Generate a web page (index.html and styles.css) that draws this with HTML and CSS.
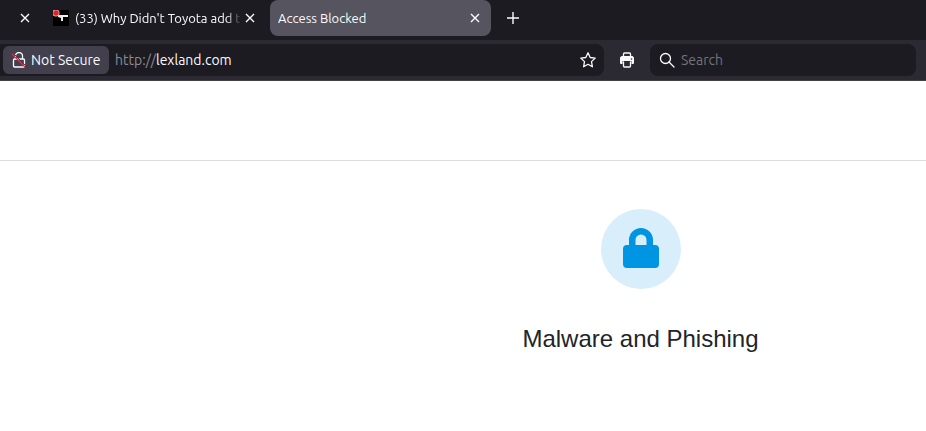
FILE: index.html
```html
<!DOCTYPE html>
<html lang="en">
<head>
<meta charset="utf-8">
<title>Access Blocked</title>
<link rel="stylesheet" href="styles.css">
</head>
<body>
<header class="browser">
  <nav class="tabs" aria-label="Tabs">
    <div class="tab tab-cut">
      <button class="close" aria-label="Close tab"><svg viewBox="0 0 16 16"><path d="M4 4l8 8M12 4l-8 8"/></svg></button>
    </div>
    <div class="tab">
      <svg class="favicon" viewBox="0 0 16 16"><path fill="#000" d="M0 0h16v16H0z"/><path fill="#eee" d="M5 5h10v2h-5v4H8V8L5 7z"/><circle cx="3" cy="3" r="3.500" fill="#f3b5b5"/><circle cx="3" cy="3" r="2.700" fill="#e5202b"/></svg>
      <span class="tab-title fade">(33) Why Didn't Toyota add t</span>
      <button class="close" aria-label="Close tab"><svg viewBox="0 0 16 16"><path d="M4 4l8 8M12 4l-8 8"/></svg></button>
    </div>
    <div class="tab active">
      <span class="tab-title">Access Blocked</span>
      <button class="close" aria-label="Close tab"><svg viewBox="0 0 16 16"><path d="M4 4l8 8M12 4l-8 8"/></svg></button>
    </div>
    <button class="new-tab" aria-label="New tab"><svg viewBox="0 0 16 16"><path d="M8 2v12M2 8h12"/></svg></button>
  </nav>
  <div class="toolbar">
    <div class="address">
      <button class="security">
        <svg viewBox="0 0 16 16"><path class="line" d="M4.500 7V4a3.500 3.500 0 0 1 7 0V7M3.500 7h9a1 1 0 0 1 1 1v6a1 1 0 0 1-1 1h-9a1 1 0 0 1-1-1V8a1 1 0 0 1 1-1z"/><path class="gap" d="M2 1l13 13"/><path class="slash" d="M1 2l13 13"/></svg>
        <span>Not Secure</span>
      </button>
      <span class="url"><span class="scheme">http://</span>lexland.com</span>
      <button class="icon-button" aria-label="Bookmark this page"><svg viewBox="0 0 16 16"><path class="line" d="M8 .8l2.200 4.700 5 .6-3.700 3.500.9 5.200L8 12.300l-4.400 2.500.9-5.200L.8 6.100l5-.6z"/></svg></button>
    </div>
    <button class="icon-button" aria-label="Print"><svg viewBox="0 0 16 16"><path class="solid" d="M2.500 4h11L15 5.500V11q0 1-1 1h-1.500V9h-9v3H2q-1 0-1-1V5.500z"/><path class="line" d="M4.500 4V2a1 1 0 0 1 1-1h5a1 1 0 0 1 1 1v2M4.500 10v4a1 1 0 0 0 1 1h5a1 1 0 0 0 1-1v-4"/><circle cx="12.500" cy="7" r=".8" fill="#2b2a33"/></svg></button>
    <label class="search">
      <svg viewBox="0 0 16 16"><circle class="line" cx="6.500" cy="6.500" r="5"/><path class="line" d="M10 10l5 5"/></svg>
      <input type="text" placeholder="Search" aria-label="Search">
    </label>
  </div>
</header>
<div class="banner"></div>
<main class="blocked">
  <div class="badge">
    <svg viewBox="0 0 36 42"><path d="M9.250 19v-7a8.750 8.750 0 0 1 17.500 0V19" fill="none" stroke="#0095e2" stroke-width="6.500"/><rect y="17" width="36" height="23" rx="4" fill="#0095e2"/></svg>
  </div>
  <h1>Malware and Phishing</h1>
</main>
</body>
</html>
```

FILE: styles.css
```css
* {
  box-sizing: border-box;
}

body {
  margin: 0;
  background: #fff;
  font-family: "Liberation Sans", Arial, sans-serif;
}

button {
  border: 0;
  padding: 0;
  background: none;
  color: inherit;
  font: inherit;
}

svg {
  display: block;
  flex: none;
  width: 16px;
  height: 16px;
}

.browser {
  color: #fbfbfe;
  font-family: Ubuntu, "Noto Sans", sans-serif;
  font-size: 14px;
}

.tabs {
  display: flex;
  gap: 4px;
  height: 40px;
  padding-bottom: 4px;
  background: #1c1b22;
  font-size: 13px;
}

.tab {
  display: flex;
  align-items: center;
  width: 221px;
  padding: 0 8px;
}

.tab-cut {
  justify-content: flex-end;
  width: 41px;
}

.active {
  border-radius: 8px;
  background: #55545f;
}

.favicon {
  margin-right: 6px;
}

.tab-title {
  flex: 1;
  min-width: 0;
  overflow: hidden;
  white-space: nowrap;
}

.fade {
  mask-image: linear-gradient(to left, transparent, #000 16px);
}

.close path,
.new-tab path {
  fill: none;
  stroke: #fbfbfe;
  stroke-width: 1.4;
}

.new-tab {
  display: grid;
  place-items: center;
  width: 36px;
}

.toolbar {
  display: grid;
  grid-template-columns: 604fr 32px 266fr;
  align-items: center;
  gap: 7px;
  height: 41px;
  padding-right: 10px;
  border-bottom: 1px solid #42404a;
  background: #2b2a33;
}

.address {
  display: flex;
  align-items: center;
  height: 32px;
  padding-left: 3px;
  border-radius: 0 8px 8px 0;
  background: #1c1b22;
}

.security {
  display: flex;
  align-items: center;
  gap: 4px;
  width: 106px;
  height: 28px;
  padding-left: 8px;
  border-radius: 6px;
  background: #42404c;
  white-space: nowrap;
}

.url {
  flex: 1;
  padding-left: 6px;
}

.scheme {
  color: #8c8b92;
}

.line {
  fill: none;
  stroke: #fbfbfe;
  stroke-width: 1.3;
  stroke-linejoin: round;
  stroke-linecap: round;
}

.solid {
  fill: #fbfbfe;
}

.gap {
  stroke: #42404c;
  stroke-width: 1;
}

.slash {
  stroke: #e22850;
  stroke-width: 1.3;
}

.icon-button {
  display: grid;
  place-items: center;
  width: 32px;
  height: 32px;
}

.search {
  display: flex;
  align-items: center;
  gap: 6px;
  height: 32px;
  padding: 0 9px;
  border-radius: 8px;
  background: #1c1b22;
}

.search input {
  flex: 1;
  min-width: 0;
  border: 0;
  padding: 0;
  outline: 0;
  background: none;
  color: inherit;
  font: inherit;
}

.search input::placeholder {
  color: #74737a;
}

.banner {
  height: 80px;
  border-bottom: 1px solid #dcdcdc;
}

.blocked {
  display: flex;
  flex-direction: column;
  align-items: center;
  gap: 36px;
  margin-left: 355px;
  padding-top: 48px;
}

.badge {
  display: grid;
  place-items: center;
  width: 80px;
  height: 80px;
  border-radius: 50%;
  background: #d8effb;
}

.badge svg {
  width: 36px;
  height: 42px;
}

h1 {
  margin: 0;
  color: #212529;
  font-size: 24px;
  font-weight: 400;
  line-height: 28px;
}
```
